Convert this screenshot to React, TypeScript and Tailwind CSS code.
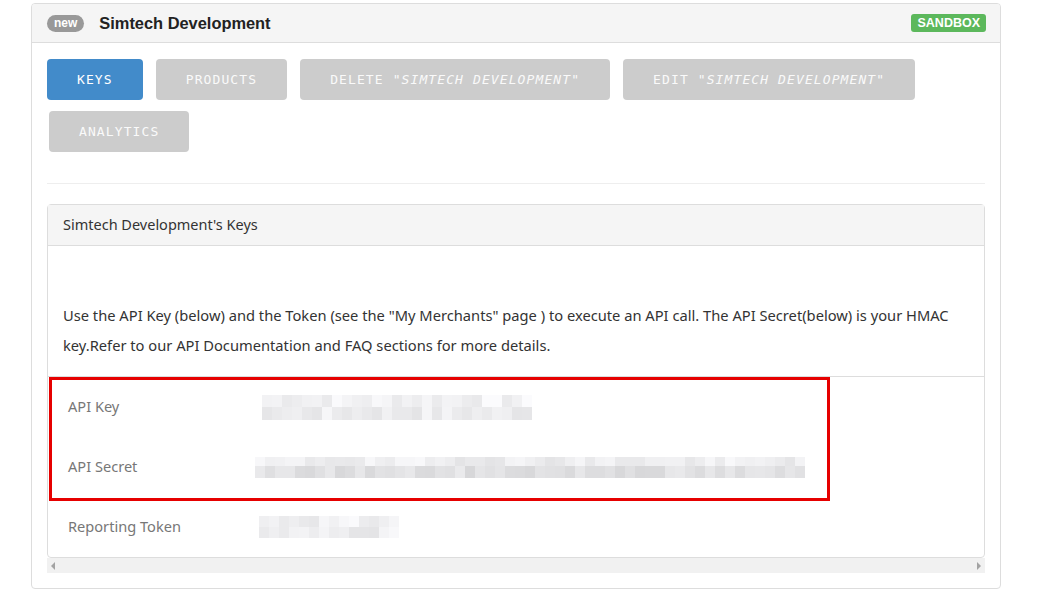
const tabs = [
  { label: 'KEYS', active: true },
  { label: 'PRODUCTS' },
  { label: 'DELETE', quoted: 'SIMTECH DEVELOPMENT' },
  { label: 'EDIT', quoted: 'SIMTECH DEVELOPMENT' },
]

// pixelated "blurred" value, deterministic shades
function Blur({ width, rows, seed, base }: { width: number; rows: { h: number; tone: number }[]; seed: number; base: number }) {
  const cols = Math.round(width / 10)
  let s = seed
  const rnd = () => {
    s = (s * 9301 + 49297) % 233280
    return s / 233280
  }
  return (
    <div className="flex flex-col">
      {rows.map((row, r) => (
        <div key={r} className="flex">
          {Array.from({ length: cols }).map((_, c) => {
            const v = Math.round(base + row.tone + rnd() * 20)
            return <div key={c} style={{ width: 10, height: row.h, background: `rgb(${v},${v},${v + 2})` }} />
          })}
        </div>
      ))}
    </div>
  )
}

function TabButton({ label, active, quoted }: { label: string; active?: boolean; quoted?: string }) {
  return (
    <button
      className={
        'h-[41px] rounded-[4px] px-[30px] text-[13px] tracking-[1.1px] ' +
        (active ? 'bg-[#428bca] text-white' : 'bg-[#cccccc] text-[#fafafa]')
      }
      style={{ fontFamily: '"DejaVu Sans Mono", monospace' }}
    >
      {label}
      {quoted && (
        <>
          {' "'}
          <i>{quoted}</i>
          {'"'}
        </>
      )}
    </button>
  )
}

export default function App() {
  const round = { fontFamily: '"Noto Sans", sans-serif' }
  return (
    <div className="bg-white w-[1054px] h-[616px] pt-[3px] pl-[31px]">
      <div className="w-[970px] h-[586px] border border-[#dddddd] rounded-[4px] overflow-hidden">
        <div
          className="h-[39px] bg-[#f5f5f5] border-b border-[#dddddd] flex items-center pl-[15px] pr-[14px]"
          style={{ fontFamily: '"Liberation Sans", Arial, sans-serif' }}
        >
          <span className="h-[17px] px-[7px] rounded-full bg-[#999999] text-white text-[12px] font-bold leading-[17px]">new</span>
          <span className="ml-[15px] text-[16.4px] font-bold text-[#222222]">Simtech Development</span>
          <span className="ml-auto h-[18px] px-[6px] rounded-[3px] bg-[#5cb85c] text-white text-[12.5px] font-bold leading-[18px]">
            SANDBOX
          </span>
        </div>

        <div className="px-[15px] pt-[16px]">
          <div className="flex flex-wrap gap-x-[13px] gap-y-[11px] w-[900px]">
            {tabs.map((t) => (
              <TabButton key={t.label} {...t} />
            ))}
            <div className="ml-[2px]">
              <TabButton label="ANALYTICS" />
            </div>
          </div>

          <div className="mt-[31px] h-px bg-[#eeeeee]" />

          <div className="mt-[20px] border border-[#dddddd] rounded-[4px] relative" style={round}>
            <div className="h-[41px] bg-[#f5f5f5] border-b border-[#dddddd] flex items-center pl-[15px] text-[14.5px] text-[#333333]">
              Simtech Development's Keys
            </div>
            <div className="px-[15px] pt-[54px] pb-[16px] text-[14.7px] leading-[30px] text-[#333333] whitespace-nowrap">
              Use the API Key (below) and the Token (see the "My Merchants" page ) to execute an API call. The API Secret(below) is your HMAC
              <br />
              key.Refer to our API Documentation and FAQ sections for more details.
            </div>
            <div className="border-t border-[#dddddd]">
              <div className="h-[60px] flex items-center pl-[20px]">
                <span className="w-[194px] text-[14.6px] text-[#777777]">API Key</span>
                <Blur width={270} rows={[{ h: 12, tone: 6 }, { h: 13, tone: 0 }]} seed={7} base={226} />
              </div>
              <div className="h-[60px] flex items-center pl-[20px]">
                <span className="w-[187px] text-[14.6px] text-[#777777]">API Secret</span>
                <Blur width={550} rows={[{ h: 9, tone: 14 }, { h: 12, tone: 0 }]} seed={19} base={214} />
              </div>
              <div className="h-[60px] flex items-center pl-[20px]">
                <span className="w-[191px] text-[14.6px] text-[#777777]">Reporting Token</span>
                <Blur width={142} rows={[{ h: 11, tone: 2 }, { h: 11, tone: 0 }]} seed={31} base={228} />
              </div>
            </div>
            <div className="absolute left-[1px] top-[172px] w-[781px] h-[124px] border-[3px] border-[#e60000]" />
          </div>

          <div className="h-[15px] bg-[#f1f1f1] flex items-center justify-between px-[4px]">
            <span className="w-0 h-0 border-y-[4px] border-y-transparent border-r-[4px] border-r-[#a3a3a3]" />
            <span className="w-0 h-0 border-y-[4px] border-y-transparent border-l-[4px] border-l-[#a3a3a3]" />
          </div>
        </div>
      </div>
    </div>
  )
}
